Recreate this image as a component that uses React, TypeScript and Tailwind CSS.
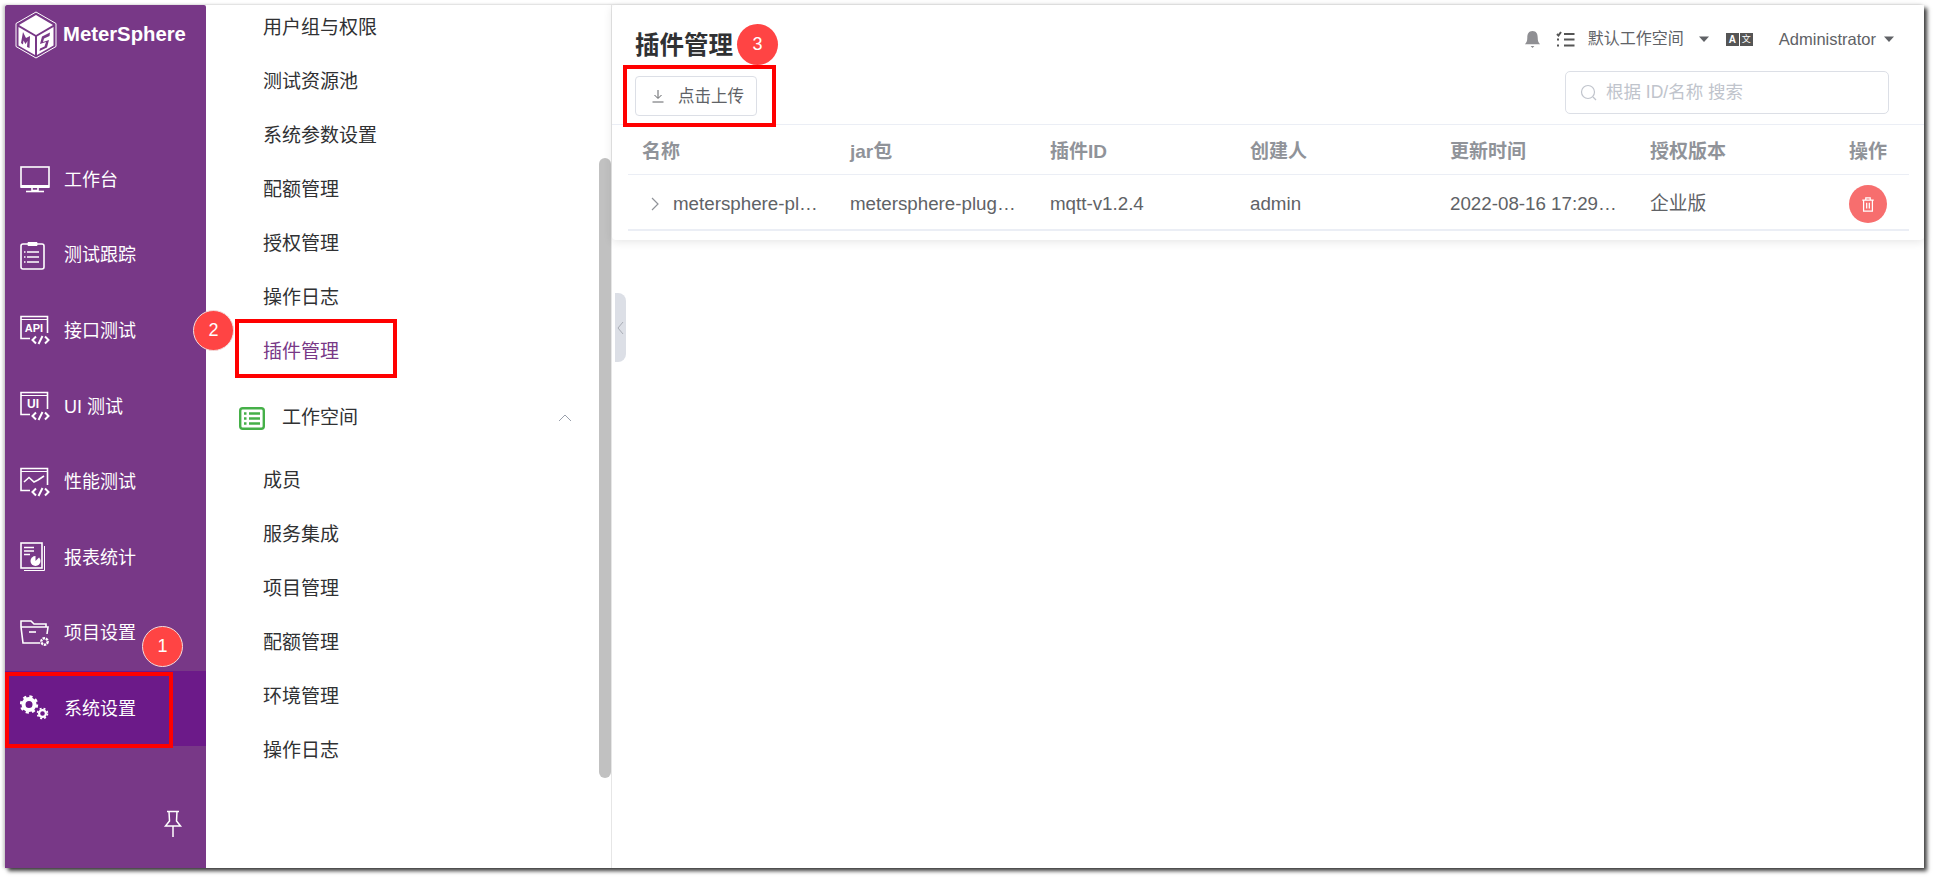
import React from "react";

const S = { fill: "none", stroke: "currentColor", strokeWidth: 1.6 } as const;

const Logo = () => (
  <svg width="42" height="48" viewBox="0 0 42 48" className="shrink-0">
    <path d="M21 1 L41 12.5 V35.5 L21 47 L1 35.5 V12.5 Z" fill="none" stroke="#fff" strokeWidth="1" />
    <path d="M21 4 L38 14 L21 24 L4 14 Z" fill="#fff" />
    <path d="M3.5 16 L20 25.5 V44 L3.5 34.5 Z" fill="#fff" />
    <path d="M38.5 16 L22 25.5 V44 L38.5 34.5 Z" fill="#fff" />
    <path d="M6 32 L8 21 L11 27 L15 25 L14.5 37 L12 36 L12.5 30 L10.5 33 L8.5 29.5 L8 33.5 Z" fill="#783887" />
    <path d="M35 21.5 L27 25.5 L25 33 L31 31 L29.5 35.5 L25 37.5 L24.5 40 L32 36.5 L34 29 L28 31 L29 27.5 L34.5 25 Z" fill="#783887" />
  </svg>
);

const CodeTag = () => (
  <g fill="none" stroke="currentColor" strokeWidth={2}>
    <path d="M16 21.5 L12.5 25 L16 28.5" />
    <path d="M25 21.5 L28.5 25 L25 28.5" />
    <path d="M22.5 21 L18.5 29" />
  </g>
);

const WinFrame = ({ children }: { children?: React.ReactNode }) => (
  <svg width="30" height="30" viewBox="0 0 30 30">
    <path d="M10 23.5 H1 V1.5 H27.5 V18" {...S} />
    <path d="M1 4.5 H27.5" {...S} strokeWidth={1} />
    {children}
    <CodeTag />
  </svg>
);

const icons: Record<string, React.ReactNode> = {
  work: (
    <svg width="30" height="27" viewBox="0 0 30 27">
      <rect x="1" y="1" width="28" height="20" {...S} />
      <path d="M1 19 H29 V22 H1 Z" fill="currentColor" />
      <path d="M12 22 V24.5 H18 V22" {...S} />
      <path d="M6 25.5 H24" {...S} />
    </svg>
  ),
  track: (
    <svg width="26" height="30" viewBox="0 0 26 30">
      <rect x="1" y="4" width="23" height="25" rx="2" {...S} />
      <path d="M8 5.5 V2.5 H17 V5.5 Z" fill="currentColor" stroke="currentColor" />
      <path d="M7 12 H19 M7 17 H19 M7 22 H19" {...S} />
      <path d="M4 12 H5.5 M4 17 H5.5 M4 22 H5.5" {...S} />
    </svg>
  ),
  api: (
    <WinFrame>
      <text x="14" y="16.5" textAnchor="middle" fontSize="11" fontWeight="700" fill="currentColor" fontFamily="Liberation Sans">API</text>
    </WinFrame>
  ),
  ui: (
    <WinFrame>
      <text x="13" y="17" textAnchor="middle" fontSize="12" fontWeight="700" fill="currentColor" fontFamily="Liberation Sans">UI</text>
    </WinFrame>
  ),
  perf: (
    <WinFrame>
      <path d="M4 15 L9 10.5 L14 15 L18 13 L24 9" {...S} />
    </WinFrame>
  ),
  report: (
    <svg width="27" height="30" viewBox="0 0 27 30">
      <rect x="1" y="1" width="21" height="25" {...S} />
      <path d="M24.5 4 V28.5 H4" {...S} strokeWidth={1} />
      <path d="M4 5.5 H14 M4 9 H14 M4 12.5 H10" {...S} />
      <circle cx="15.5" cy="19" r="5" fill="currentColor" />
      <path d="M15.5 19 V13.5 H21 Z" fill="#783887" />
    </svg>
  ),
  project: (
    <svg width="30" height="28" viewBox="0 0 30 28">
      <path d="M20 24 H3 L1 8 V2 H11 L14 5 H26 V8" {...S} />
      <path d="M1 8 H28 L27 15" {...S} />
      <path d="M9 13 H16" {...S} />
      <circle cx="24.5" cy="22.5" r="3.2" fill="none" stroke="currentColor" strokeWidth="2.4" strokeDasharray="2.4 0.8" />
    </svg>
  ),
  system: (
    <svg width="30" height="26" viewBox="0 0 30 26">
      <circle cx="9" cy="9.5" r="5.5" fill="none" stroke="currentColor" strokeWidth="4" />
      <circle cx="9" cy="9.5" r="8" fill="none" stroke="currentColor" strokeWidth="2.4" strokeDasharray="3.2 3.1" />
      <circle cx="22.5" cy="18.5" r="3.4" fill="none" stroke="currentColor" strokeWidth="2.2" />
      <circle cx="22.5" cy="18.5" r="5" fill="none" stroke="currentColor" strokeWidth="1.6" strokeDasharray="2 2" />
    </svg>
  ),
};

const nav = [
  { k: "work", t: "工作台" },
  { k: "track", t: "测试跟踪" },
  { k: "api", t: "接口测试" },
  { k: "ui", t: "UI 测试" },
  { k: "perf", t: "性能测试" },
  { k: "report", t: "报表统计" },
  { k: "project", t: "项目设置" },
  { k: "system", t: "系统设置" },
];

const subTop = ["用户组与权限", "测试资源池", "系统参数设置", "配额管理", "授权管理", "操作日志"];
const subBottom = ["成员", "服务集成", "项目管理", "配额管理", "环境管理", "操作日志"];

const SubItem = ({ t, active }: { t: string; active?: boolean }) => (
  <div className={`h-[54px] pt-[1px] flex items-center pl-[57px] text-[19px] ${active ? "text-[#783887]" : "text-[#303133]"}`}>{t}</div>
);

const Badge = ({ n, cls }: { n: number; cls: string }) => (
  <div className={`absolute z-20 w-[41px] h-[41px] rounded-full bg-[#ff4444] border border-[#f3dcdc] text-white text-[18px] flex items-center justify-center ${cls}`}>{n}</div>
);

const Caret = () => (
  <svg width="10" height="6" viewBox="0 0 10 6"><path d="M0 0.5 H10 L5 6 Z" fill="#606266" /></svg>
);

const cols = ["jar包", "插件ID", "创建人", "更新时间", "授权版本"];

export default function App() {
  return (
    <div className="w-[1933px] h-[877px] bg-white overflow-hidden pl-[5px] pt-[5px] pr-[9px] pb-[9px] font-['Liberation_Sans','Noto_Sans_CJK_SC',sans-serif]">
      <div className="relative flex h-full bg-white shadow-[3px_3px_4px_rgba(0,0,0,0.75),-2px_0_3px_rgba(0,0,0,0.2)]">
        {/* primary sidebar */}
        <aside className="relative w-[201px] shrink-0 bg-[#783887] text-white flex flex-col rounded-t-[2px]">
          <div className="h-[136.5px] shrink-0 flex items-start pl-[10px] pt-[6px] gap-[6px]">
            <Logo />
            <span className="text-[20.3px] font-bold mt-[11px] leading-[24px]">MeterSphere</span>
          </div>
          <nav className="flex flex-col">
            {nav.map((n) => (
              <div key={n.k} className={`h-[75.6px] flex items-center ${n.k === "system" ? "bg-[#6c1a89]" : ""}`}>
                <div className="w-[59px] shrink-0 pl-[15px] flex items-center">{icons[n.k]}</div>
                <span className="text-[18px] mt-[2px]">{n.t}</span>
              </div>
            ))}
          </nav>
          <div className="mt-auto pb-[30px] pl-[158px]">
            <svg width="20" height="28" viewBox="0 0 20 28">
              <path d="M4 1.5 H16 M6 1.5 L6.5 11 L2.5 16 H17.5 L13.5 11 L14 1.5 M10 16 V27" fill="none" stroke="#fff" strokeWidth="1.5" />
            </svg>
          </div>
        </aside>

        {/* secondary menu */}
        <section className="relative w-[406px] shrink-0 border-r border-[#e6e6e6] overflow-hidden">
          <div className="-mt-[4px]">
            {subTop.map((t) => <SubItem key={t} t={t} />)}
            <SubItem t="插件管理" active />
            <div className="h-[75px] pt-[3px] flex items-center pl-[33px] pr-[39px]">
              <svg width="26" height="23" viewBox="0 0 26 23">
                <rect x="1.2" y="1.2" width="23.6" height="20.6" rx="2.5" fill="none" stroke="#45b048" strokeWidth="2.4" />
                <path d="M5 6.5 H7.5 M5 11.5 H7.5 M5 16.5 H7.5 M10 6.5 H21 M10 11.5 H21 M10 16.5 H21" stroke="#45b048" strokeWidth="2.6" />
              </svg>
              <span className="ml-[17px] text-[19px] text-[#303133]">工作空间</span>
              <svg className="ml-auto" width="14" height="8" viewBox="0 0 14 8"><path d="M1 7 L7 1 L13 7" fill="none" stroke="#9aa0ac" strokeWidth="1" /></svg>
            </div>
            {subBottom.map((t, i) => <SubItem key={i} t={t} />)}
          </div>
          <div className="absolute left-[393px] top-[153px] w-[12px] h-[620px] rounded-[6px] bg-[#c1c1c1]" />
          <div className="absolute left-[29px] top-[314px] w-[162px] h-[59px] border-[4px] border-[#ff0000]" />
        </section>

        {/* main */}
        <main className="relative flex-1 min-w-0">
          <div className="absolute left-[3px] top-[288px] w-[11px] h-[69px] rounded-r-[8px] bg-[#dcdfe6] flex items-center justify-center">
            <svg width="7" height="14" viewBox="0 0 7 14"><path d="M6 1 L1 7 L6 13" fill="none" stroke="#a9adb5" strokeWidth="1" /></svg>
          </div>
          <div className="bg-white rounded-[4px] shadow-[0_2px_10px_rgba(0,0,0,0.1)] h-[235px]">
            <div className="h-[120px] flex justify-between border-b border-[#ebeef5]">
              <div className="pl-[23px] pt-[25px]">
                <h1 className="text-[24.5px] leading-[32px] font-bold text-[#303133]">插件管理</h1>
                <button className="mt-[14px] w-[122px] h-[40px] border border-[#dcdfe6] rounded-[4px] flex items-center pl-[15px] text-[#606266] text-[16.5px]">
                  <svg width="14" height="14" viewBox="0 0 14 14"><path d="M7 1 V9 M3.5 6 L7 9.5 L10.5 6 M1.5 13 H12.5" fill="none" stroke="#606266" strokeWidth="1" /></svg>
                  <span className="ml-[13px]">点击上传</span>
                </button>
              </div>
              <div className="flex flex-col items-end pr-[30px]">
                <div className="h-[34px] mt-[17px] flex items-center text-[16px] text-[#606266]">
                  <svg width="17" height="19" viewBox="0 0 18 20"><path d="M9 1 C5 1 3.5 4 3.5 8 C3.5 12 2.5 13.5 1 15 H17 C15.5 13.5 14.5 12 14.5 8 C14.5 4 13 1 9 1 Z M7 17 H11 L9 19 Z" fill="#8f8f93" /></svg>
                  <svg className="ml-[15px]" width="19" height="17" viewBox="0 0 19 17"><path d="M1 3 L2.5 4.5 L5 1 M1 8.5 H3 M1 14.5 H3 M8 3 H18.5 M8 8.5 H18.5 M8 14.5 H18.5" fill="none" stroke="#555" strokeWidth="2" /></svg>
                  <span className="ml-[13px]">默认工作空间</span>
                  <span className="ml-[15px] flex"><Caret /></span>
                  <span className="ml-[17px] flex gap-[1px]">
                    <span className="w-[13px] h-[13px] bg-[#555] text-white text-[10px] font-bold leading-[13px] text-center">A</span>
                    <span className="w-[13px] h-[13px] bg-[#555] text-white text-[9px] leading-[13px] text-center">文</span>
                  </span>
                  <span className="ml-[26px] text-[16.5px]">Administrator</span>
                  <span className="ml-[8px] flex"><Caret /></span>
                </div>
                <div className="mt-[15px] mr-[5px] w-[324px] h-[43px] border border-[#dcdfe6] rounded-[5px] flex items-center pl-[14px] text-[17.5px] text-[#c0c4cc]">
                  <svg width="18" height="18" viewBox="0 0 18 18"><circle cx="8" cy="8" r="6.5" fill="none" stroke="#c0c4cc" strokeWidth="1.2" /><path d="M13 13 L16 16" stroke="#c0c4cc" strokeWidth="1.2" /></svg>
                  <span className="ml-[8px]">根据 ID/名称 搜索</span>
                </div>
              </div>
            </div>
            <div className="ml-[16px] mr-[15px]">
              <div className="h-[50px] pt-[5px] grid grid-cols-[208px_repeat(5,200px)_1fr] items-center border-b border-[#ebeef5] text-[19px] font-bold text-[#909399]">
                <span className="pl-[14px]">名称</span>
                {cols.map((c) => <span key={c} className="pl-[14px]">{c}</span>)}
                <span className="pl-[13px]">操作</span>
              </div>
              <div className="h-[56px] pt-[4px] grid grid-cols-[208px_repeat(5,200px)_1fr] items-center border-b-[2px] border-[#ebeef5] text-[18.75px] text-[#606266]">
                <div className="flex items-center pl-[23px] pr-[16px] min-w-0">
                  <svg className="shrink-0" width="8" height="14" viewBox="0 0 8 14"><path d="M1 1 L7 7 L1 13" fill="none" stroke="#909399" strokeWidth="1.2" /></svg>
                  <span className="ml-[14px] truncate">metersphere-plugin-mqtt-v1.2.4</span>
                </div>
                <span className="pl-[14px] pr-[19px] truncate">metersphere-plugin-mqtt-v1.2.4.jar</span>
                <span className="pl-[14px] truncate">mqtt-v1.2.4</span>
                <span className="pl-[14px] truncate">admin</span>
                <span className="pl-[14px] pr-[16px] truncate">2022-08-16 17:29:48</span>
                <span className="pl-[14px] truncate">企业版</span>
                <span className="pl-[13px]">
                  <span className="w-[38px] h-[38px] rounded-full bg-[#f76e6e] flex items-center justify-center">
                    <svg width="14" height="15" viewBox="0 0 15 17"><path d="M1 3.5 H14 M5 3.5 V1 H10 V3.5 M2.5 3.5 V16 H12.5 V3.5 M6 6.5 V13 M9 6.5 V13" fill="none" stroke="#fff" strokeWidth="1.4" /></svg>
                  </span>
                </span>
              </div>
            </div>
          </div>
          <div className="absolute left-[11px] top-[60px] w-[153px] h-[62px] border-[4px] border-[#ff0000]" />
        </main>

        <Badge n={1} cls="left-[137px] top-[621px]" />
        <Badge n={2} cls="left-[188px] top-[305px]" />
        <Badge n={3} cls="left-[732px] top-[19px] !border-0" />
        <div className="absolute left-0 top-[667px] w-[168px] h-[76px] border-[4px] border-[#ff0000]" />
      </div>
    </div>
  );
}
